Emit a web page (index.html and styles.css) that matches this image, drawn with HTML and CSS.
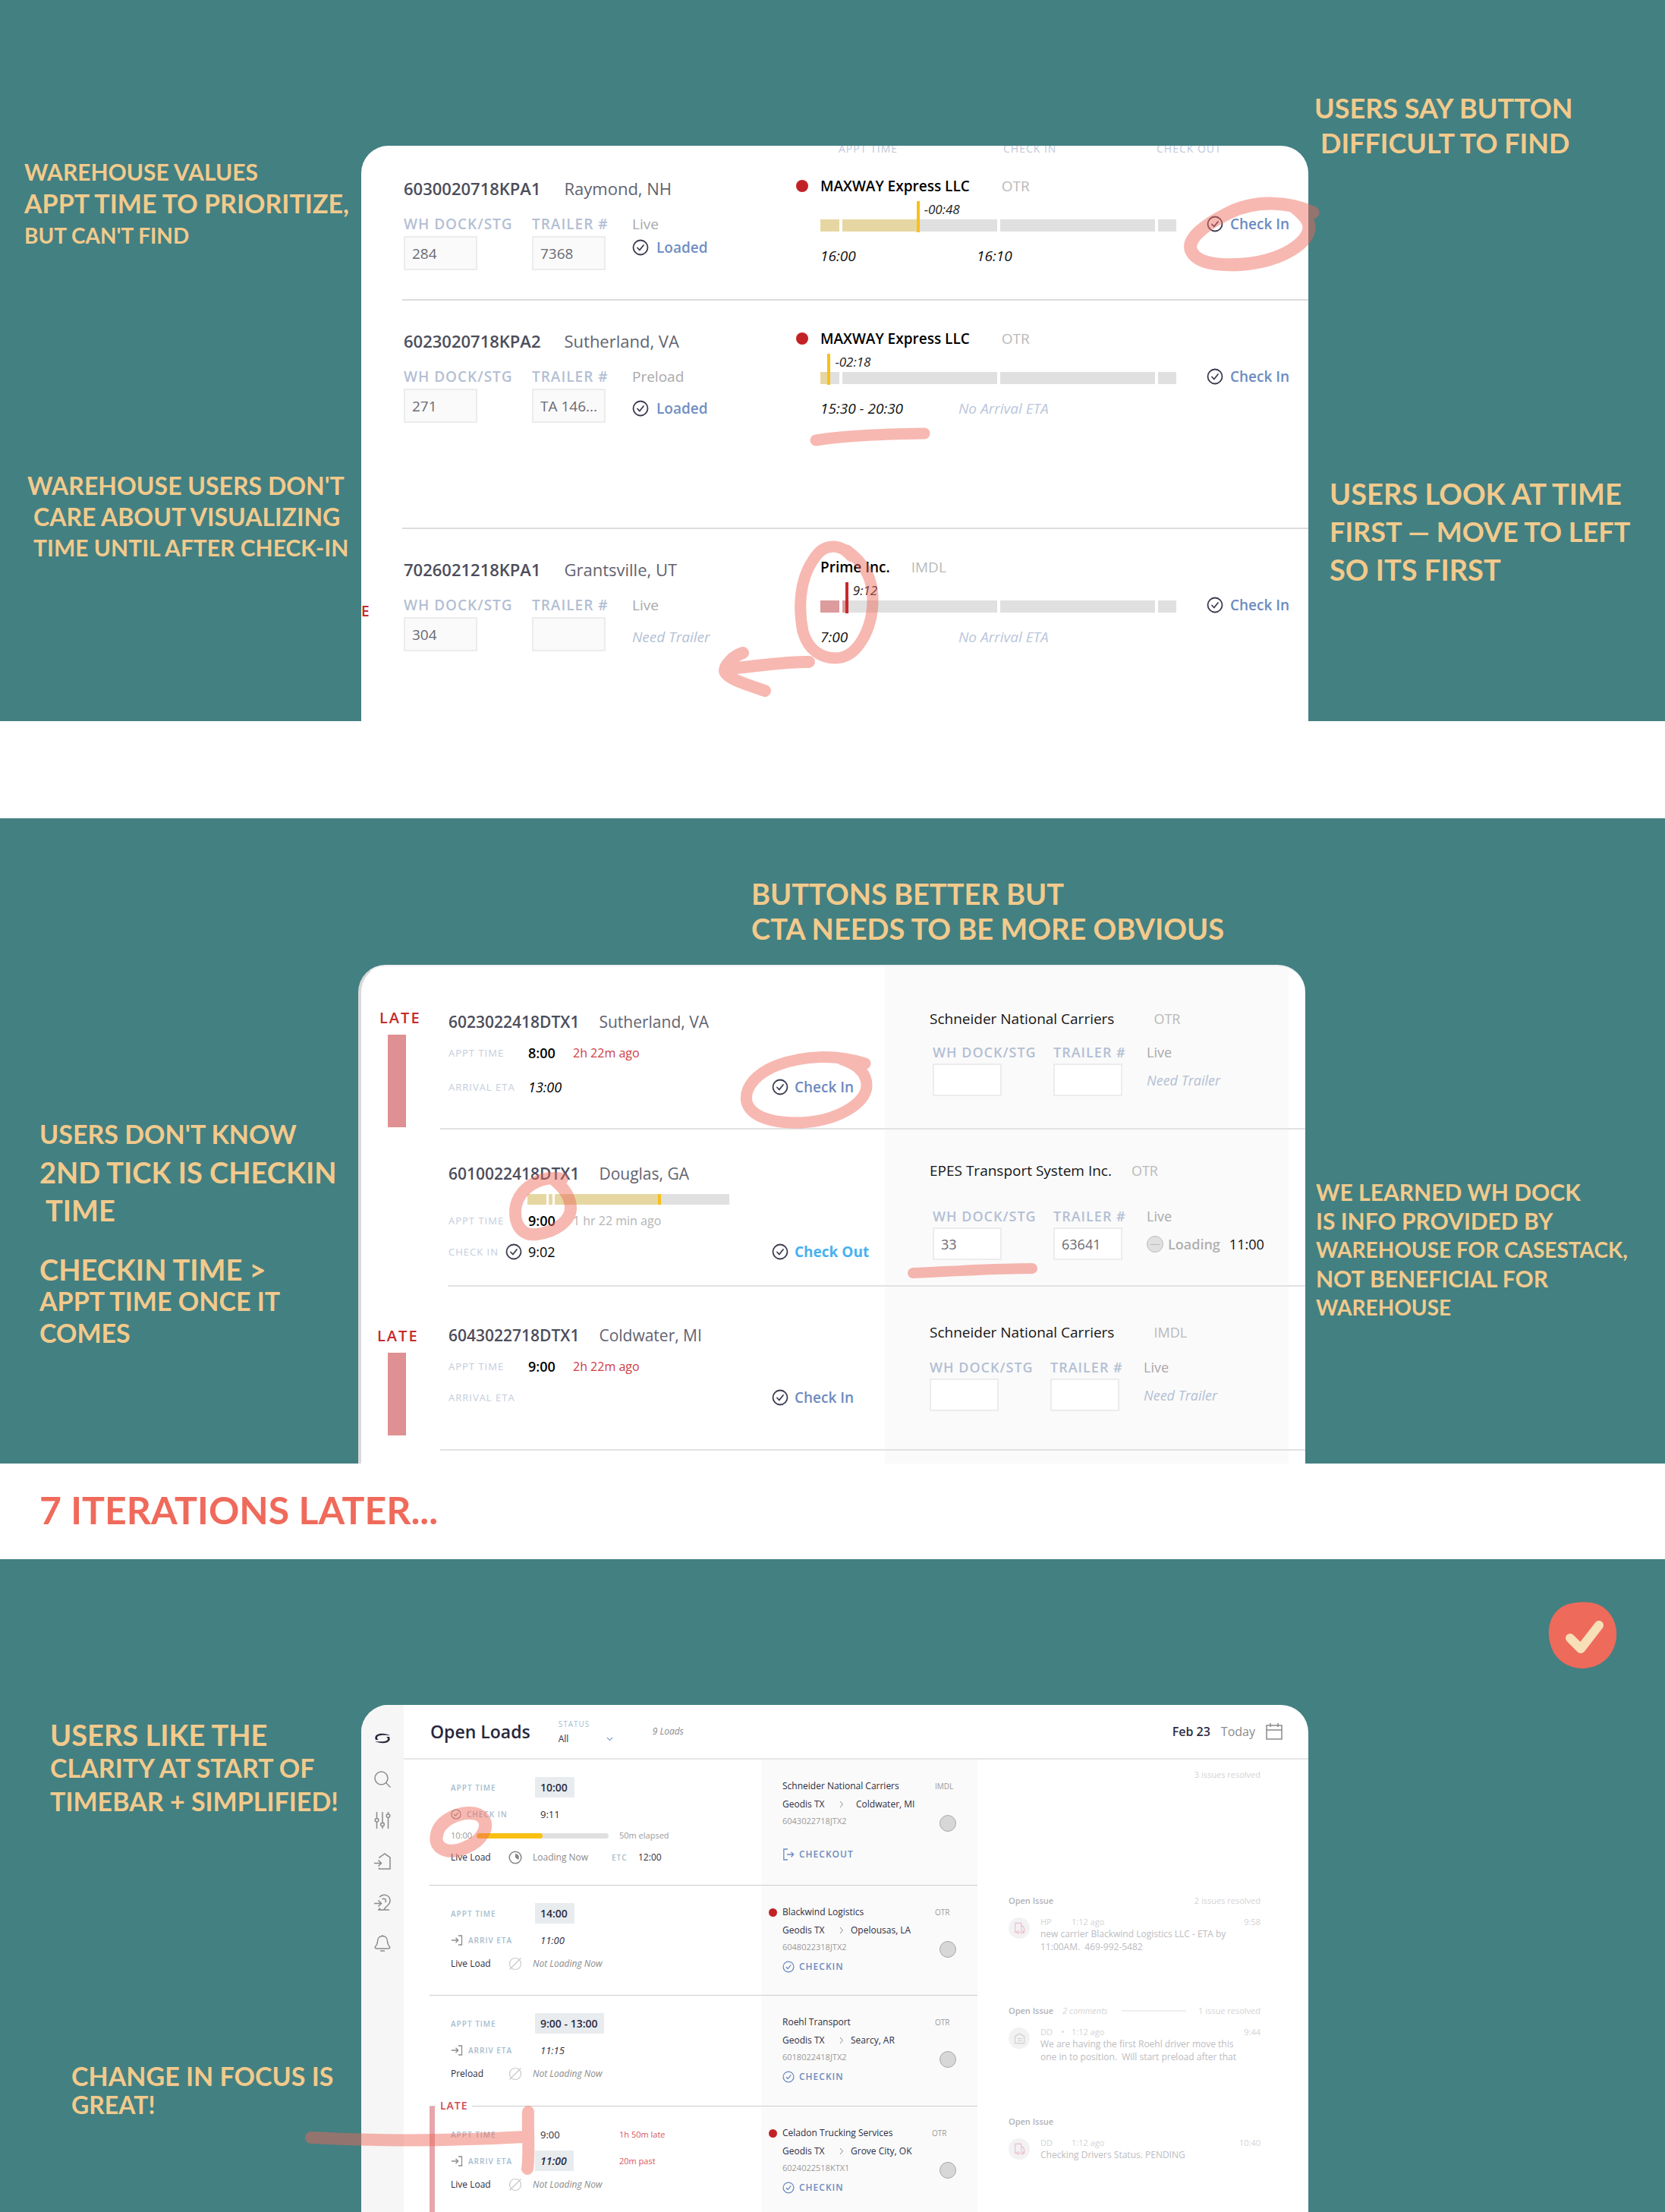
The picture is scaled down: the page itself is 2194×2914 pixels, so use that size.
FILE: index.html
```html
<!DOCTYPE html>
<html lang="en">
<head>
<meta charset="utf-8">
<meta name="viewport" content="width=device-width, initial-scale=1">
<title>Open Loads – design iterations</title>
<link rel="stylesheet" href="styles.css">
</head>
<body>

<svg class="sprite" aria-hidden="true">
  <symbol id="i-check" viewBox="0 0 22 22"><g fill="none" stroke="currentColor" stroke-linecap="round" stroke-linejoin="round"><circle cx="11" cy="11" r="9.5" stroke-width="1.8"/><path d="M7 11.5l2.8 3L15 8" stroke-width="1.8"/></g></symbol>
  <symbol id="i-arrive" viewBox="0 0 16 14"><path d="M1 7h8.5M6.5 3.8L9.7 7l-3.2 3.2M10 1h4.5v12H10" fill="none" stroke="currentColor" stroke-width="1.3"/></symbol>
  <symbol id="i-leave" viewBox="0 0 16 16"><path d="M7 1H1.8v14H7M6 8h8.5M11.5 4.8L14.7 8l-3.2 3.2" fill="none" stroke="currentColor" stroke-width="1.3"/></symbol>
  <symbol id="i-idle" viewBox="0 0 18 18"><path d="M1.5 16.5l15-15" fill="none" stroke="currentColor" stroke-width="1.2"/><circle cx="9" cy="9" r="7.5" fill="none" stroke="currentColor" stroke-width="1.2"/></symbol>
  <symbol id="i-pie" viewBox="0 0 18 18"><circle cx="9" cy="9" r="7.8" fill="none" stroke="currentColor" stroke-width="1.5"/><path d="M9 9V4a5 5 0 0 1 4 8z" fill="currentColor"/></symbol>
  <symbol id="i-next" viewBox="0 0 6 10"><path d="M1 1l3.5 4L1 9" fill="none" stroke="currentColor" stroke-width="1"/></symbol>
  <symbol id="i-truck" viewBox="0 0 16 18"><g fill="none" stroke="currentColor" stroke-width="1.3"><path d="M4 15H1.5V1.5h9V12M10.500 6H13l2 4v5h-1"/><circle cx="5.800" cy="15" r="1.800"/><circle cx="12" cy="15" r="1.800"/></g></symbol>
  <symbol id="i-house" viewBox="0 0 16 16"><path d="M1.500 15V5.500L8 1.500l6.500 4V15zM5 8.500h6M5 11.500h6" fill="none" stroke="currentColor" stroke-width="1.200"/></symbol>
</svg>

<section class="panel panel-first">
  <aside class="notes notes-left">
    <p class="note"><span class="n30">WAREHOUSE VALUES</span><span class="n34">APPT TIME TO PRIORITIZE,</span><span class="n28">BUT CAN'T FIND</span></p>
    <p class="note"><span class="n32">WAREHOUSE USERS DON'T</span><span class="n32 in">CARE ABOUT VISUALIZING</span><span class="n30 in">TIME UNTIL AFTER CHECK-IN</span></p>
  </aside>

  <div class="stage">
    <main class="card card-a">
      <div class="a-head"><span>APPT TIME</span><span>CHECK IN</span><span>CHECK OUT</span></div>

      <article class="a-row">
        <div class="a-load">
          <h3 class="load-id"><b>6030020718KPA1</b><span>Raymond, NH</span></h3>
          <div class="fields">
            <div class="field"><label for="a1d">WH DOCK/STG</label><input id="a1d" value="284"></div>
            <div class="field"><label for="a1t">TRAILER #</label><input id="a1t" value="7368"></div>
            <div class="state state-near"><span>Live</span><strong><svg class="ic"><use href="#i-check"/></svg>Loaded</strong></div>
          </div>
        </div>
        <div class="a-carrier">
          <p class="carrier"><i class="dot"></i><b>MAXWAY Express LLC</b><span>OTR</span></p>
          <div class="track">
            <i class="seg"><i style="width:100%"></i></i><i class="seg"><i style="width:48%"></i></i><i class="seg"></i><i class="seg"></i>
            <span class="marker" style="left:27%"><em>-00:48</em></span>
          </div>
          <p class="times"><time>16:00</time><time class="second">16:10</time></p>
        </div>
        <button class="check"><svg class="ic"><use href="#i-check"/></svg>Check In</button>
      </article>

      <article class="a-row a-row-tall">
        <div class="a-load">
          <h3 class="load-id"><b>6023020718KPA2</b><span>Sutherland, VA</span></h3>
          <div class="fields">
            <div class="field"><label for="a2d">WH DOCK/STG</label><input id="a2d" value="271"></div>
            <div class="field"><label for="a2t">TRAILER #</label><input id="a2t" value="TA 146..."></div>
            <div class="state"><span>Preload</span><strong><svg class="ic"><use href="#i-check"/></svg>Loaded</strong></div>
          </div>
        </div>
        <div class="a-carrier">
          <p class="carrier"><i class="dot"></i><b>MAXWAY Express LLC</b><span>OTR</span></p>
          <div class="track">
            <i class="seg"><i style="width:44%"></i></i><i class="seg"></i><i class="seg"></i><i class="seg"></i>
            <span class="marker" style="left:2%"><em>-02:18</em></span>
          </div>
          <p class="times"><time>15:30 - 20:30</time><span>No Arrival ETA</span></p>
        </div>
        <button class="check"><svg class="ic"><use href="#i-check"/></svg>Check In</button>
      </article>

      <article class="a-row a-row-last">
        <span class="flag">E</span>
        <div class="a-load">
          <h3 class="load-id"><b>7026021218KPA1</b><span>Grantsville, UT</span></h3>
          <div class="fields">
            <div class="field"><label for="a3d">WH DOCK/STG</label><input id="a3d" value="304"></div>
            <div class="field"><label for="a3t">TRAILER #</label><input id="a3t" value=""></div>
            <div class="state"><span>Live</span><em>Need Trailer</em></div>
          </div>
        </div>
        <div class="a-carrier">
          <p class="carrier tight"><b>Prime Inc.</b><span>IMDL</span></p>
          <div class="track track-late">
            <i class="seg"><i style="width:100%"></i></i><i class="seg"><i style="width:3%"></i></i><i class="seg"></i><i class="seg"></i>
            <span class="marker" style="left:7%"><em>9:12</em></span>
          </div>
          <p class="times"><time>7:00</time><span>No Arrival ETA</span></p>
        </div>
        <button class="check"><svg class="ic"><use href="#i-check"/></svg>Check In</button>
      </article>
    </main>
    <svg class="marks" aria-hidden="true"><g transform="translate(-476 -192)">
      <path stroke-width="17" d="M1730 280C1700 266 1655 262 1618 281C1584 298 1563 316 1570 331C1577 346 1602 351 1640 348C1690 343 1725 320 1725 299C1725 289 1716 281 1706 273"/>
      <path stroke-width="15" d="M1075 580C1120 573 1170 572 1218 571"/>
      <path stroke-width="15" d="M1122 733C1108 716 1086 714 1072 737C1053 764 1052 802 1058 832C1065 857 1083 867 1101 867C1130 867 1150 828 1150 790C1150 758 1136 740 1116 725"/>
      <path stroke-width="16" d="M1066 872C1040 871 1000 877 970 880M979 860C966 864 955 876 955 884C957 894 985 902 1008 910"/>
    </g></svg>
  </div>

  <aside class="notes notes-right">
    <p class="note"><span class="n36">USERS SAY BUTTON</span><span class="n36 in">DIFFICULT TO FIND</span></p>
    <p class="note airy"><span class="n38">USERS LOOK AT TIME</span><span class="n36">FIRST — MOVE TO LEFT</span><span class="n38">SO ITS FIRST</span></p>
  </aside>
</section>

<section class="panel panel-second">
  <aside class="notes notes-left">
    <p class="note big"><span class="n34">USERS DON'T KNOW</span><span class="n38">2ND TICK IS CHECKIN</span><span class="n38 in">TIME</span></p>
    <p class="note close"><span class="n38">CHECKIN TIME &gt;</span><span class="n34">APPT TIME ONCE IT</span><span class="n34">COMES</span></p>
  </aside>

  <div class="stage">
    <p class="note headline"><span class="n38">BUTTONS BETTER BUT</span><span class="n38">CTA NEEDS TO BE MORE OBVIOUS</span></p>
    <div class="board">
      <div class="card card-b">
        <article class="b-row">
          <div class="late"><b>LATE</b><i></i></div>
          <div class="b-body">
            <div class="b-main">
              <h3 class="load-id"><b>6023022418DTX1</b><span>Sutherland, VA</span></h3>
              <div class="line"><small>APPT TIME</small><b>8:00</b><span class="ago red">2h 22m ago</span></div>
              <div class="line last"><small>ARRIVAL ETA</small><em>13:00</em><button class="check"><svg class="ic"><use href="#i-check"/></svg>Check In</button></div>
            </div>
            <div class="b-carrier">
              <p class="carrier"><b>Schneider National Carriers</b><span>OTR</span></p>
              <div class="fields">
                <div class="field"><label for="b1d">WH DOCK/STG</label><input id="b1d" value=""></div>
                <div class="field"><label for="b1t">TRAILER #</label><input id="b1t" value=""></div>
                <div class="state"><span>Live</span><em>Need Trailer</em></div>
              </div>
            </div>
          </div>
        </article>

        <article class="b-row b-row-open">
          <div class="late"></div>
          <div class="b-body">
            <div class="b-main">
              <h3 class="load-id"><b>6010022418DTX1</b><span>Douglas, GA</span></h3>
              <div class="ticks"><i class="t1"></i><i class="t2"></i><i class="t3"></i><i class="t4"></i></div>
              <div class="line"><small>APPT TIME</small><b>9:00</b><span class="ago">1 hr 22 min ago</span></div>
              <div class="line last"><small class="with-icon">CHECK IN<svg class="ic"><use href="#i-check"/></svg></small><span>9:02</span><button class="check out"><svg class="ic"><use href="#i-check"/></svg>Check Out</button></div>
            </div>
            <div class="b-carrier">
              <p class="carrier tight"><b>EPES Transport System Inc.</b><span>OTR</span></p>
              <div class="fields">
                <div class="field"><label for="b2d">WH DOCK/STG</label><input id="b2d" value="33"></div>
                <div class="field"><label for="b2t">TRAILER #</label><input id="b2t" value="63641"></div>
                <div class="state"><span>Live</span><strong class="loading"><i></i>Loading<time>11:00</time></strong></div>
              </div>
            </div>
          </div>
        </article>

        <article class="b-row b-row-low">
          <div class="late"><b>LATE</b><i></i></div>
          <div class="b-body">
            <div class="b-main">
              <h3 class="load-id"><b>6043022718DTX1</b><span>Coldwater, MI</span></h3>
              <div class="line"><small>APPT TIME</small><b>9:00</b><span class="ago red">2h 22m ago</span></div>
              <div class="line last"><small>ARRIVAL ETA</small><em></em><button class="check"><svg class="ic"><use href="#i-check"/></svg>Check In</button></div>
            </div>
            <div class="b-carrier">
              <p class="carrier"><b>Schneider National Carriers</b><span>IMDL</span></p>
              <div class="fields">
                <div class="field"><label for="b3d">WH DOCK/STG</label><input id="b3d" value=""></div>
                <div class="field"><label for="b3t">TRAILER #</label><input id="b3t" value=""></div>
                <div class="state"><span>Live</span><em>Need Trailer</em></div>
              </div>
            </div>
          </div>
        </article>
      </div>
      <svg class="marks" aria-hidden="true"><g transform="translate(-472 -1271)">
        <path stroke-width="15" d="M1140 1401C1100 1388 1058 1391 1025 1403C998 1413 980 1432 984 1452C990 1472 1020 1480 1055 1479C1102 1477 1142 1454 1142 1430C1142 1412 1128 1402 1110 1396"/>
        <path stroke-width="16" d="M741 1553C712 1547 678 1567 679 1599C680 1620 693 1628 707 1626C732 1623 753 1608 752 1590C751 1575 742 1564 731 1555"/>
        <path stroke-width="14" d="M1203 1677C1250 1675 1310 1671 1360 1671"/>
      </g></svg>
    </div>
  </div>

  <aside class="notes notes-right">
    <p class="note wide"><span class="n30">WE LEARNED WH DOCK</span><span class="n30">IS INFO PROVIDED BY</span><span class="n28">WAREHOUSE FOR CASESTACK,</span><span class="n30">NOT BENEFICIAL FOR</span><span class="n28">WAREHOUSE</span></p>
  </aside>
</section>

<h2 class="later">7 ITERATIONS LATER...</h2>

<section class="panel panel-third">
  <aside class="notes notes-left">
    <p class="note tall"><span class="n38">USERS LIKE THE</span><span class="n34">CLARITY AT START OF</span><span class="n34">TIMEBAR + SIMPLIFIED!</span></p>
    <p class="note focus"><span class="n34">CHANGE IN FOCUS IS</span><span class="n32">GREAT!</span></p>
  </aside>

  <div class="stage">
    <div class="card card-c">
      <nav class="rail" aria-label="Main">
        <button aria-label="Home"><svg viewBox="0 0 22 22"><path d="M2 13C-.5 8 4 4.500 11 4.800c4 .1 7 .9 10 2.400C16 6.500 6.500 6 4.500 8.800c-1 1.400-.5 3 1.500 4.200zM20 9c2.500 5-2 8.500-9 8.200-4-.1-7-.9-10-2.400 5 .7 14.500 1.200 16.500-1.600 1-1.400.5-3-1.500-4.200z" fill="#25263a" stroke="none"/></svg></button>
        <button aria-label="Search"><svg viewBox="0 0 22 22"><circle cx="9.500" cy="9.500" r="8.500"/><path d="M15.500 15.500l6 6"/></svg></button>
        <button aria-label="Filters"><svg viewBox="0 0 22 22"><path d="M3.500 0v8.500M3.500 13v9M11 0v14M11 19v3M18.500 8v14M18.500 0v2"/><circle cx="3.500" cy="10.800" r="2.300"/><circle cx="11" cy="16.500" r="2.300"/><circle cx="18.500" cy="5" r="2.300"/></svg></button>
        <button aria-label="Arrivals"><svg viewBox="0 0 22 22"><path d="M7 7V6l7-5 7 5v15H6.500v-1.500M0 13.500h9.500M5.500 9.500l4 4-4 4"/></svg></button>
        <button aria-label="Drivers"><svg viewBox="0 0 22 22"><path d="M7 4c5-5 14-3 14 5 0 5-4 6-8 11M5 21h15M0 12.500h9M5.500 8.500l4 4-4 4M10.500 7c2-1.500 5-.5 5 2 0 1-.5 1.500-1 2M6.500 18.500l2 2.500"/></svg></button>
        <button aria-label="Alerts"><svg viewBox="0 0 22 22"><path d="M11 1.500c-4 0-6.500 3-6.500 7 0 4-1 5-2.500 6.500-1.500 1.500-.5 3 1 3h16c1.500 0 2.500-1.500 1-3-1.500-1.500-2.500-2.500-2.500-6.500 0-4-2.500-7-6.500-7zM11 0v1.500M8 21h6"/></svg></button>
      </nav>

      <div class="c-body">
        <header class="c-head">
          <h1>Open Loads</h1>
          <div class="status"><label for="status">STATUS</label>
            <div class="pick"><select id="status"><option>All</option></select><svg viewBox="0 0 10 6"><path d="M1 1l4 3.500L9 1"/></svg></div></div>
          <em>9 Loads</em>
          <div class="date"><b>Feb 23</b><span>Today</span><button aria-label="Pick a date"><svg viewBox="0 0 22 22"><path d="M1 3h20v18H1zM1 9h20M6 0v5M16 0v5"/></svg></button></div>
        </header>

        <article class="c-row">
          <div class="c-load">
            <div class="c-left">
              <div class="c-line first"><small>APPT TIME</small><b class="chip">10:00</b></div>
              <div class="c-line"><small><svg class="ic-s"><use href="#i-check"/></svg>CHECK IN</small><span>9:11</span></div>
              <div class="c-bar"><span>10:00</span><i><i style="width:50%"></i></i><span>50m elapsed</span></div>
              <div class="c-kind"><span>Live Load</span><svg class="dark"><use href="#i-pie"/></svg><span class="now">Loading Now</span><small>ETC</small><span>12:00</span></div>
            </div>
            <div class="c-mid">
              <div><p class="name">Schneider National Carriers</p>
                <p class="route"><span>Geodis TX</span><svg><use href="#i-next"/></svg><span class="far">Coldwater, MI</span></p>
                <p class="ref">6043022718JTX2</p>
                <button class="cta cta-out"><svg><use href="#i-leave"/></svg>CHECKOUT</button></div>
              <div class="side"><span>IMDL</span><i></i></div>
            </div>
          </div>
          <div class="c-issue"><p class="i-head"><span class="res">3 issues resolved</span></p></div>
        </article>

        <article class="c-row">
          <div class="c-load">
            <div class="c-left">
              <div class="c-line first"><small>APPT TIME</small><b class="chip">14:00</b></div>
              <div class="c-line"><small><svg class="ic-a"><use href="#i-arrive"/></svg>ARRIV ETA</small><em>11:00</em></div>
              <div class="c-kind"><span>Live Load</span><svg><use href="#i-idle"/></svg><em class="now">Not Loading Now</em></div>
            </div>
            <div class="c-mid">
              <div><p class="name"><i class="dot"></i>Blackwind Logistics</p>
                <p class="route"><span>Geodis TX</span><svg><use href="#i-next"/></svg><span>Opelousas, LA</span></p>
                <p class="ref">6048022318JTX2</p>
                <button class="cta"><svg><use href="#i-check"/></svg>CHECKIN</button></div>
              <div class="side"><span>OTR</span><i></i></div>
            </div>
          </div>
          <div class="c-issue">
            <p class="i-head"><b>Open Issue</b><span class="res">2 issues resolved</span></p>
            <div class="i-body"><span class="avatar pink"><svg><use href="#i-truck"/></svg></span>
              <div><p class="meta"><span>HP</span><span>1:12 ago</span><time>9:58</time></p>
              <p class="msg">new carrier Blackwind Logistics LLC - ETA by<br>11:00AM.&nbsp; 469-992-5482</p></div></div>
          </div>
        </article>

        <article class="c-row c-row-mid">
          <div class="c-load">
            <div class="c-left">
              <div class="c-line first"><small>APPT TIME</small><b class="chip">9:00 - 13:00</b></div>
              <div class="c-line"><small><svg class="ic-a"><use href="#i-arrive"/></svg>ARRIV ETA</small><em>11:15</em></div>
              <div class="c-kind"><span>Preload</span><svg><use href="#i-idle"/></svg><em class="now">Not Loading Now</em></div>
            </div>
            <div class="c-mid">
              <div><p class="name">Roehl Transport</p>
                <p class="route"><span>Geodis TX</span><svg><use href="#i-next"/></svg><span>Searcy, AR</span></p>
                <p class="ref">6018022418JTX2</p>
                <button class="cta"><svg><use href="#i-check"/></svg>CHECKIN</button></div>
              <div class="side"><span>OTR</span><i></i></div>
            </div>
          </div>
          <div class="c-issue">
            <p class="i-head"><b>Open Issue</b><em>2 comments</em><i class="rule"></i><span class="res">1 issue resolved</span></p>
            <div class="i-body"><span class="avatar"><svg><use href="#i-house"/></svg></span>
              <div><p class="meta"><span>DD</span><span class="since">1:12 ago</span><time>9:44</time></p>
              <p class="msg">We are having the first Roehl driver move this<br>one in to position.&nbsp; Will start preload after that</p></div></div>
          </div>
        </article>

        <article class="c-row c-row-late">
          <div class="c-load">
            <b class="late-tag">LATE</b>
            <div class="c-left">
              <div class="c-line first"><small>APPT TIME</small><span>9:00</span><span class="warn">1h 50m late</span></div>
              <div class="c-line"><small><svg class="ic-a"><use href="#i-arrive"/></svg>ARRIV ETA</small><em class="chip">11:00</em><span class="warn">20m past</span></div>
              <div class="c-kind"><span>Live Load</span><svg><use href="#i-idle"/></svg><em class="now">Not Loading Now</em></div>
            </div>
            <div class="c-mid">
              <div><p class="name"><i class="dot"></i>Celadon Trucking Services</p>
                <p class="route"><span>Geodis TX</span><svg><use href="#i-next"/></svg><span>Grove City, OK</span></p>
                <p class="ref">6024022518KTX1</p>
                <button class="cta"><svg><use href="#i-check"/></svg>CHECKIN</button></div>
              <div class="side"><span class="inset">OTR</span><i></i></div>
            </div>
          </div>
          <div class="c-issue">
            <p class="i-head"><b>Open Issue</b></p>
            <div class="i-body"><span class="avatar pink"><svg><use href="#i-truck"/></svg></span>
              <div><p class="meta"><span>DD</span><span>1:12 ago</span><time>10:40</time></p>
              <p class="msg">Checking Drivers Status. PENDING</p></div></div>
          </div>
        </article>
      </div>
    </div>
    <svg class="marks" aria-hidden="true"><g transform="translate(-476 -2246)">
      <path stroke-width="17" d="M575 2420C577 2398 605 2386 625 2389C640 2392 643 2405 636 2416C628 2430 605 2440 590 2438C580 2436 574 2430 575 2420Z"/>
      <path stroke-width="16" d="M410 2816C500 2821 600 2820 690 2815M696 2782C695 2800 698 2840 695 2857"/>
    </g></svg>
  </div>

  <aside class="notes notes-right">
    <svg class="badge" viewBox="0 0 90 88" role="img" aria-label="Done"><path d="M32 2C50-1 66 0 78 12C90 24 94 44 86 62C78 80 62 87 46 88C26 88 8 76 3 56C-4 32 6 6 32 2Z" fill="#ee6a5a"/><path d="M29 48L43 62L67 31" fill="none" stroke="#f7dfb8" stroke-width="12" stroke-linecap="round" stroke-linejoin="round"/></svg>
  </aside>
</section>

</body>
</html>
```
FILE: styles.css
```css
* { box-sizing: border-box; }

body {
  margin: 0;
  background: #fff;
  color: #000;
  font: 18px/24px "Open Sans", "Noto Sans", sans-serif;
}

h1, h2, h3, p { margin: 0; font-weight: 400; }
b, strong { font-weight: 600; }
time { display: inline-block; }
button {
  display: inline-flex;
  align-items: center;
  padding: 0;
  border: 0;
  background: none;
  font: inherit;
  color: inherit;
  white-space: nowrap;
  cursor: pointer;
}

.sprite { display: none; }
.ic { width: 22px; height: 22px; color: #3b3c50; flex: none; }

/* Panels */
.panel {
  display: grid;
  grid-template-columns: 476px minmax(0, 1fr) 470px;
  background: #438082;
  overflow: hidden;
}
.panel-first { margin-bottom: 128px; }
.panel-second { grid-template-columns: 472px minmax(0, 1fr) 474px; }
.stage, .board { position: relative; }
.panel-first .stage { margin-top: 192px; }
.panel-third .stage { margin-top: 192px; }
.card { background: #fff; border-radius: 36px 36px 0 0; overflow: hidden; }

.marks {
  position: absolute;
  inset: 0;
  width: 100%;
  height: 100%;
  overflow: visible;
  opacity: .465;
  fill: none;
  stroke: #ee6859;
  stroke-linecap: round;
  stroke-linejoin: round;
  pointer-events: none;
}

/* Marker notes */
.notes { display: flex; flex-direction: column; }
.note {
  font: 700 30px/42px Lato, sans-serif;
  color: #f2ca8c;
  white-space: nowrap;
}
.note span { display: block; }
.n28 { font-size: 28px; }
.n30 { font-size: 30px; }
.n32 { font-size: 32px; }
.n34 { font-size: 34px; }
.n36 { font-size: 36px; }
.n38 { font-size: 38px; }
.note .in { padding-left: 8px; }
.panel-first .notes-left { padding: 205px 0 0 32px; gap: 288px; }
.panel-first .notes-left .note + .note { padding-left: 4px; line-height: 41px; }
.panel-first .notes-right { padding: 119px 0 0 8px; gap: 414px; }
.panel-first .notes-right .note { line-height: 46px; }
.panel-first .notes-right .airy { line-height: 50px; padding-left: 20px; }
.panel-second .notes-left { padding: 391px 0 0 52px; gap: 32px; }
.note.big { line-height: 50px; }
.note.close { line-height: 42px; }
.note.headline { line-height: 46px; padding: 76px 0 25px 518px; }
.panel-second .notes-right { padding: 473px 0 0 14px; }
.note.wide { line-height: 38px; }
.panel-third .notes-left { padding: 209px 0 0 66px; gap: 321px; }
.note.tall { line-height: 44px; }
.note.focus { line-height: 38px; padding-left: 28px; }
.panel-third .notes-right { padding: 56px 64px 0 0; align-items: flex-end; }
.badge { width: 90px; height: 88px; }
.later {
  padding: 31px 52px 35px;
  font: 700 50px/60px Lato, sans-serif;
  color: #ef6a5b;
}

/* Shared load parts */
.load-id { display: flex; font-size: 22px; line-height: 28px; color: #4f505e; white-space: nowrap; }
.load-id b { color: #4c4d5b; }
.load-id span { color: #62636f; }
.fields { display: grid; }
.field, .state { display: flex; flex-direction: column; align-items: flex-start; }
.field label { color: #b3bfd4; font-weight: 600; letter-spacing: 1px; white-space: nowrap; }
.field input {
  border: 2px solid #ececec;
  background: #fafafa;
  color: #6a6a74;
  font: inherit;
  border-radius: 0;
}
.state > span { color: #a9a9a9; }
.state em { color: #b3bfd4; white-space: nowrap; }
.state strong { display: flex; align-items: center; color: #6f8fc2; }
.carrier { position: relative; display: flex; white-space: nowrap; }
.carrier span { color: #b9b9b9; }
.dot { position: absolute; border-radius: 50%; background: #c22226; }
.check { color: #6b8bc0; font-weight: 600; gap: 9px; }
.check.out { color: #49b1ef; font-weight: 700; }

/* First card */
.card-a { font-size: 19px; }
.a-head {
  display: grid;
  grid-template-columns: 217px 202px 1fr;
  margin: -8px 0 -13px;
  padding-left: 629px;
  font-size: 14px;
  letter-spacing: 1px;
  color: #c0c9da;
  white-space: nowrap;
}
.a-row {
  position: relative;
  display: grid;
  grid-template-columns: minmax(0, 1fr) 542px 134px;
  align-items: start;
  min-height: 201px;
  margin-left: 54px;
  padding-left: 2px;
  border-bottom: 2px solid #dcdcdc;
}
.a-row-tall { min-height: 301px; }
.a-row-last { min-height: 253px; border: 0; }
.flag { position: absolute; left: -54px; top: 96px; color: #c62a2c; font-weight: 600; }
.a-load { padding-top: 39px; }
.a-load .load-id { gap: 31px; }
.a-load .fields { grid-template-columns: 169px 132px 1fr; margin-top: 21px; }
.a-load input { width: 97px; height: 45px; margin-top: 4px; padding: 0 9px; }
.a-load .state { gap: 18px; }
.a-load .state-near { gap: 7px; }
.a-load strong { gap: 10px; }
.a-carrier { padding: 38px 0 0 33px; }
.a-carrier .carrier { gap: 42px; }
.a-carrier .carrier.tight { gap: 28px; }
.a-carrier .dot { left: -32px; top: 4px; width: 16px; height: 16px; }
.track { position: relative; display: grid; grid-template-columns: 25px 1fr 1fr 24px; gap: 4px; width: 469px; margin: 32px 0 20px; }
.seg { height: 16px; background: #e0e0e0; }
.seg i { display: block; height: 100%; background: #e6d7a2; }
.track-late .seg i { background: #dc9b9d; }
.marker { position: absolute; bottom: -1px; width: 4px; height: 41px; background: #f9bf1a; }
.track-late .marker { background: #c62a2c; }
.marker em { position: absolute; left: 10px; top: 1px; font-size: 17px; line-height: 20px; color: #222; }
.times { display: flex; font-style: italic; white-space: nowrap; color: #111; }
.times time { width: 182px; }
.times .second { margin-left: 24px; }
.times span { color: #bac6db; }
.a-row > .check { margin-top: 88px; justify-self: start; }

/* Second card */
.card-b {
  border-left: 4px solid #d9d9d9;
  border-top: 2px solid #f0f0f0;
  padding-bottom: 17px;
  background: linear-gradient(#fafafa, #fafafa) right 22px top / 532px 100% no-repeat #fff;
}
.b-row { display: grid; grid-template-columns: 104px minmax(0, 1fr); min-height: 215px; }
.b-row-open { min-height: 207px; }
.b-row-low { min-height: 216px; }
.late { display: flex; flex-direction: column; align-items: flex-start; padding: 56px 0 3px 24px; }
.late b { color: #c62a2c; font-size: 20px; letter-spacing: 2px; }
.late i { flex: 1; width: 24px; margin: 10px 0 0 11px; background: #df9092; }
.b-row-low .late { padding: 53px 0 20px 21px; }
.b-row-low .late i { margin-left: 14px; }
.b-body { display: grid; grid-template-columns: minmax(0, 1fr) 532px 22px; border-bottom: 2px solid #e2e2e2; }
.b-row-open .b-body { margin-left: 10px; }
.b-main { padding: 59px 0 0 11px; }
.b-row-open .b-main { padding: 44px 0 0 1px; }
.b-row-low .b-main { padding-top: 50px; }
.b-main .load-id { gap: 26px; font-size: 21px; }
.line { display: grid; grid-template-columns: 105px 59px 1fr; align-items: center; height: 26px; margin-top: 14px; white-space: nowrap; }
.line small { font-size: 13px; letter-spacing: 1px; color: #c3cddd; }
.with-icon { display: flex; align-items: center; gap: 9px; }
.line.last { margin-top: 19px; }
.b-row-open .line { margin-top: 8px; }
.b-row-open .line.last, .b-row-low .line.last { margin-top: 15px; }
.ago { font-size: 16px; color: #b4b4b4; }
.ago.red { color: #cf3d42; }
.line .check { justify-self: end; width: 149px; font-size: 19px; gap: 8px; }
.ticks { display: flex; gap: 3px; height: 14px; margin: 13px 0 0 104px; }
.ticks i { background: #e6d7a2; }
.t1 { width: 25px; }
.t2 { width: 5px; }
.ticks .t3 { width: 140px; border-right: 4px solid #f9bf1a; }
.ticks .t4 { width: 90px; margin-left: -3px; background: #e0e0e0; }
.b-carrier { padding: 57px 0 0 59px; }
.b-row-open .b-carrier { padding-top: 42px; }
.b-row-low .b-carrier { padding-top: 48px; }
.b-carrier .carrier { gap: 52px; }
.b-carrier .carrier.tight { gap: 26px; }
.b-carrier .carrier b { font-size: 19px; font-weight: 500; color: #151515; }
.b-carrier .fields { grid-template-columns: 159px 123px 1fr; margin: 20px 0 0 4px; }
.b-row-open .fields { margin-top: 36px; }
.b-row-low .fields { margin: 22px 0 0; }
.b-carrier input { width: 91px; height: 43px; margin-top: 3px; padding: 0 9px; background: #fff; }
.b-carrier .state { gap: 13px; }
.b-carrier .state strong { gap: 6px; color: #b0b0b0; white-space: nowrap; }
.loading i { width: 22px; height: 22px; border: 1px solid #bbb; border-radius: 50%; background: linear-gradient(#bbb, #bbb) center / 12px 1px no-repeat #e0e0e0; }
.loading time { margin-left: 6px; color: #111; font-weight: 400; }

/* Third card */
.card-c { display: grid; grid-template-columns: 56px minmax(0, 1fr); font-size: 12px; line-height: 20px; color: #2c2d42; }
.rail { display: flex; flex-direction: column; align-items: center; gap: 32px; padding-top: 33px; background: #f6f6f6; }
.rail svg, .date svg { display: block; width: 22px; height: 22px; fill: none; stroke: #8b8b8b; stroke-width: 1.5; overflow: visible; }
.c-body { background: linear-gradient(#fafafa, #fafafa) right 436px top 72px / 285px 100% no-repeat; }
.c-head { display: flex; align-items: center; height: 72px; padding: 0 34px 0 35px; border-bottom: 2px solid #e4e6e8; white-space: nowrap; }
.c-head h1 { font-size: 23px; line-height: 32px; font-weight: 600; color: #26273c; }
.status { margin-left: 37px; width: 72px; }
.status label { display: block; font-size: 10px; line-height: 20px; letter-spacing: 1px; color: #a5bdd0; }
.pick { display: flex; align-items: center; justify-content: space-between; }
.pick select { appearance: none; width: 60px; border: 0; padding: 0; background: none; font: inherit; color: inherit; }
.pick svg { width: 9px; height: 6px; fill: none; stroke: #6b8bc0; stroke-width: 1.2; }
.c-head em { margin-left: 52px; font-size: 12px; color: #8b8b8b; }
.date { display: flex; align-items: center; gap: 14px; margin-left: auto; font-size: 16px; }
.date span { color: #8b8b8b; }

.c-row { display: grid; grid-template-columns: minmax(0, 1fr) 436px; min-height: 145px; }
.c-head + .c-row { min-height: 166px; }
.c-row-mid { min-height: 146px; }
.c-row-late { min-height: 139px; }
.c-load { position: relative; display: grid; grid-template-columns: minmax(0, 1fr) 285px; margin-left: 34px; border-bottom: 1px solid #cdcdcd; }
.c-row-late .c-load { border-bottom: 0; }
.c-row-late .c-load::before { content: ""; position: absolute; left: 0; top: 0; bottom: 0; width: 7px; background: #e6a6ab; }
.late-tag { position: absolute; left: 8px; top: -11px; padding: 0 5px 0 6px; background: #fff; color: #d24a52; font-size: 14px; letter-spacing: 1px; }
.c-left { padding: 23px 0 0 28px; white-space: nowrap; }
.c-left small { font-size: 10px; font-weight: 600; letter-spacing: 1px; color: #a5bdd0; }
.c-line { display: grid; grid-template-columns: 111px 111px 1fr; align-items: center; justify-items: start; height: 27px; font-size: 13px; margin-top: 8px; }
.c-line.first { margin-top: 0; }
.c-line small { display: flex; align-items: center; gap: 7px; }
.c-line > :nth-child(2) { padding-left: 7px; }
.c-line .chip { padding: 0 9px 0 7px; background: #e8ecef; font-size: 14px; font-weight: 600; line-height: 27px; }
.ic-s { width: 14px; height: 14px; color: #8b8b8b; }
.ic-a { width: 16px; height: 14px; color: #8b8b8b; }
.warn { font-size: 11px; color: #db5560; }
.c-bar { display: flex; align-items: center; height: 16px; margin-top: 7px; font-size: 11px; color: #9a9a9a; }
.c-bar > span:first-child { width: 34px; }
.c-bar > i { width: 174px; height: 7px; margin-right: 14px; border-radius: 4px; background: #e0e0e0; overflow: hidden; }
.c-bar > i > i { display: block; height: 7px; border-radius: 4px; background: #f9c013; }
.c-kind { display: flex; align-items: center; margin-top: 8px; }
.c-bar + .c-kind { margin-top: 11px; }
.c-kind > span:first-child { width: 76px; }
.c-kind svg { width: 18px; height: 18px; color: #c9c9c9; }
.c-kind svg.dark { color: #858585; }
.c-kind .now { width: 104px; margin-left: 14px; color: #8b8b8b; }
.c-kind small { width: 35px; }

.c-mid { display: grid; grid-template-columns: minmax(0, 1fr) 56px; padding: 25px 0 0 28px; white-space: nowrap; }
.name { position: relative; }
.name .dot { left: -18px; top: 5px; width: 11px; height: 11px; }
.route { display: flex; align-items: center; margin-top: 4px; }
.route span:first-child { width: 75px; }
.route svg { width: 6px; height: 10px; margin-right: 9px; color: #8b8b8b; }
.route .far { margin-left: 7px; }
.ref { margin-top: 2px; font-size: 11px; color: #9a9a9a; }
.cta { gap: 6px; margin-top: 6px; color: #6b8bc0; font-weight: 600; letter-spacing: 1px; }
.cta svg { width: 16px; height: 16px; }
.cta-out { margin-top: 24px; }
.side { font-size: 10px; color: #9a9a9a; }
.side i { display: block; width: 22px; height: 22px; margin: 28px 0 0 6px; border: 1px solid #a9a9a9; border-radius: 50%; background: #d7d7d7; }
.side .inset { display: block; margin-left: -4px; }

.c-issue { padding: 12px 63px 0 41px; font-size: 11px; color: #d3d3d3; white-space: nowrap; }
.i-head { display: flex; align-items: center; line-height: 16px; }
.i-head b { color: #b2b2b8; }
.i-head em { margin-left: 12px; }
.rule { flex: 1; height: 2px; margin: 0 16px 0 18px; background: #eeeeee; }
.res { margin-left: auto; }
.i-body { display: grid; grid-template-columns: 42px 1fr; margin-top: 12px; }
.avatar { display: grid; place-items: center; width: 28px; height: 28px; margin-top: 2px; border-radius: 50%; background: #f2f2f2; color: #cfcfcf; }
.avatar svg { width: 15px; height: 16px; }
.avatar.pink { color: #eeb9d3; }
.meta { display: flex; line-height: 15px; }
.meta span:first-child { width: 41px; }
.meta .since { position: relative; }
.since::before { content: ""; position: absolute; left: -13px; top: 6px; width: 3px; height: 3px; border-radius: 50%; background: #dcdcdc; }
.meta time { margin-left: auto; }
.msg { font-size: 12px; line-height: 17px; color: #bcbcc1; }
```
